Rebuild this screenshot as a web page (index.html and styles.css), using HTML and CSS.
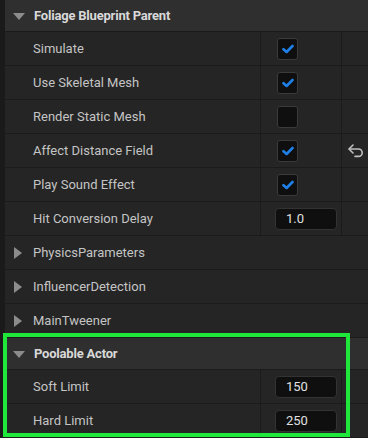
FILE: index.html
```html
<!DOCTYPE html>
<html>
<head>
<meta charset="utf-8">
<link rel="stylesheet" href="styles.css">
</head>
<body>
<div class="panel">
  <div class="cat open"><span class="tri-down"></span><span class="cat-title">Foliage Blueprint Parent</span></div>
  <div class="row"><div class="name">Simulate</div><div class="val"><span class="cb checked"><svg viewBox="0 0 12 10" class="tick"><path d="M1.5 5.2 L4.6 8 L10.5 2"/></svg></span></div><div class="extra"></div></div>
  <div class="row"><div class="name">Use Skeletal Mesh</div><div class="val"><span class="cb checked"><svg viewBox="0 0 12 10" class="tick"><path d="M1.5 5.2 L4.6 8 L10.5 2"/></svg></span></div><div class="extra"></div></div>
  <div class="row"><div class="name">Render Static Mesh</div><div class="val"><span class="cb"></span></div><div class="extra"></div></div>
  <div class="row"><div class="name">Affect Distance Field</div><div class="val"><span class="cb checked"><svg viewBox="0 0 12 10" class="tick"><path d="M1.5 5.2 L4.6 8 L10.5 2"/></svg></span></div><div class="extra"><svg class="reset" viewBox="0 0 18 15"><path d="M6 2 L2 6 L6 10"/><path d="M2.3 6 H11.5 A3.7 3.7 0 0 1 11.5 13.4 H8"/></svg></div></div>
  <div class="row"><div class="name">Play Sound Effect</div><div class="val"><span class="cb checked"><svg viewBox="0 0 12 10" class="tick"><path d="M1.5 5.2 L4.6 8 L10.5 2"/></svg></span></div><div class="extra"></div></div>
  <div class="row"><div class="name">Hit Conversion Delay</div><div class="val"><span class="num">1.0</span></div><div class="extra"></div></div>
  <div class="sub"><span class="tri-right"></span><span>PhysicsParameters</span></div>
  <div class="sub"><span class="tri-right"></span><span>InfluencerDetection</span></div>
  <div class="sub"><span class="tri-right"></span><span>MainTweener</span></div>
  <div class="cat open"><span class="tri-down"></span><span class="cat-title">Poolable Actor</span></div>
  <div class="row"><div class="name">Soft Limit</div><div class="val"><span class="num">150</span></div><div class="extra"></div></div>
  <div class="row"><div class="name">Hard Limit</div><div class="val"><span class="num">250</span></div><div class="extra"></div></div>
  <div class="highlight"></div>
</div>
</body>
</html>
```
FILE: styles.css
```css
* { box-sizing: border-box; }
html, body { margin: 0; padding: 0; background: #242424; }
body { width: 368px; height: 438px; overflow: hidden; font-family: Roboto, "Liberation Sans", sans-serif; font-size: 13px; }
.panel { position: relative; border-left: 5px solid #1a1a1a; min-height: 438px; background: #242424; }
.cat { height: 32px; background: #2f2f2f; border-bottom: 1px solid #1b1b1b; display: flex; align-items: center; padding-left: 8px; color: #d9d9d9; font-weight: bold; }
.cat-title { letter-spacing: -0.2px; }
.tri-down { width: 0; height: 0; border-left: 6px solid transparent; border-right: 6px solid transparent; border-top: 7px solid #8c8c8c; margin-right: 9px; margin-top: 1px; }
.tri-right { width: 0; height: 0; border-top: 6px solid transparent; border-bottom: 6px solid transparent; border-left: 8px solid #8c8c8c; margin-left: 9px; margin-right: 11px; }
.row { display: grid; grid-template-columns: 256px 81px 1fr; height: 34px; border-bottom: 1px solid #1b1b1b; background: #252525; color: #c4c4c4; }
.name { border-right: 1px solid #1b1b1b; display: flex; align-items: center; padding-left: 28px; }
.val { border-right: 1px solid #1b1b1b; display: flex; align-items: center; padding-left: 14px; }
.extra { display: flex; align-items: center; justify-content: center; }
.sub { height: 34px; border-bottom: 1px solid #1b1b1b; background: #252525; display: flex; align-items: center; color: #c4c4c4; }
.cb { width: 21px; height: 22px; margin-left: 2px; border: 1px solid #3a3a3a; border-radius: 3px; background: #0f0f0f; display: flex; align-items: center; justify-content: center; }
.tick { width: 12px; height: 10px; fill: none; stroke: #1f7fe6; stroke-width: 2.6; stroke-linecap: round; stroke-linejoin: round; }
.num { width: 62px; height: 22px; border: 1px solid #333; border-radius: 4px; background: #0f0f0f; color: #e0e0e0; display: flex; align-items: center; padding-left: 10px; }
.reset { width: 18px; height: 15px; fill: none; stroke: #c0c0c0; stroke-width: 1.6; stroke-linecap: round; stroke-linejoin: round; margin-left: 2px; }
.highlight { position: absolute; left: -2px; top: 333px; width: 347px; height: 104px; border: 4px solid #1fe83b; pointer-events: none; }
```
